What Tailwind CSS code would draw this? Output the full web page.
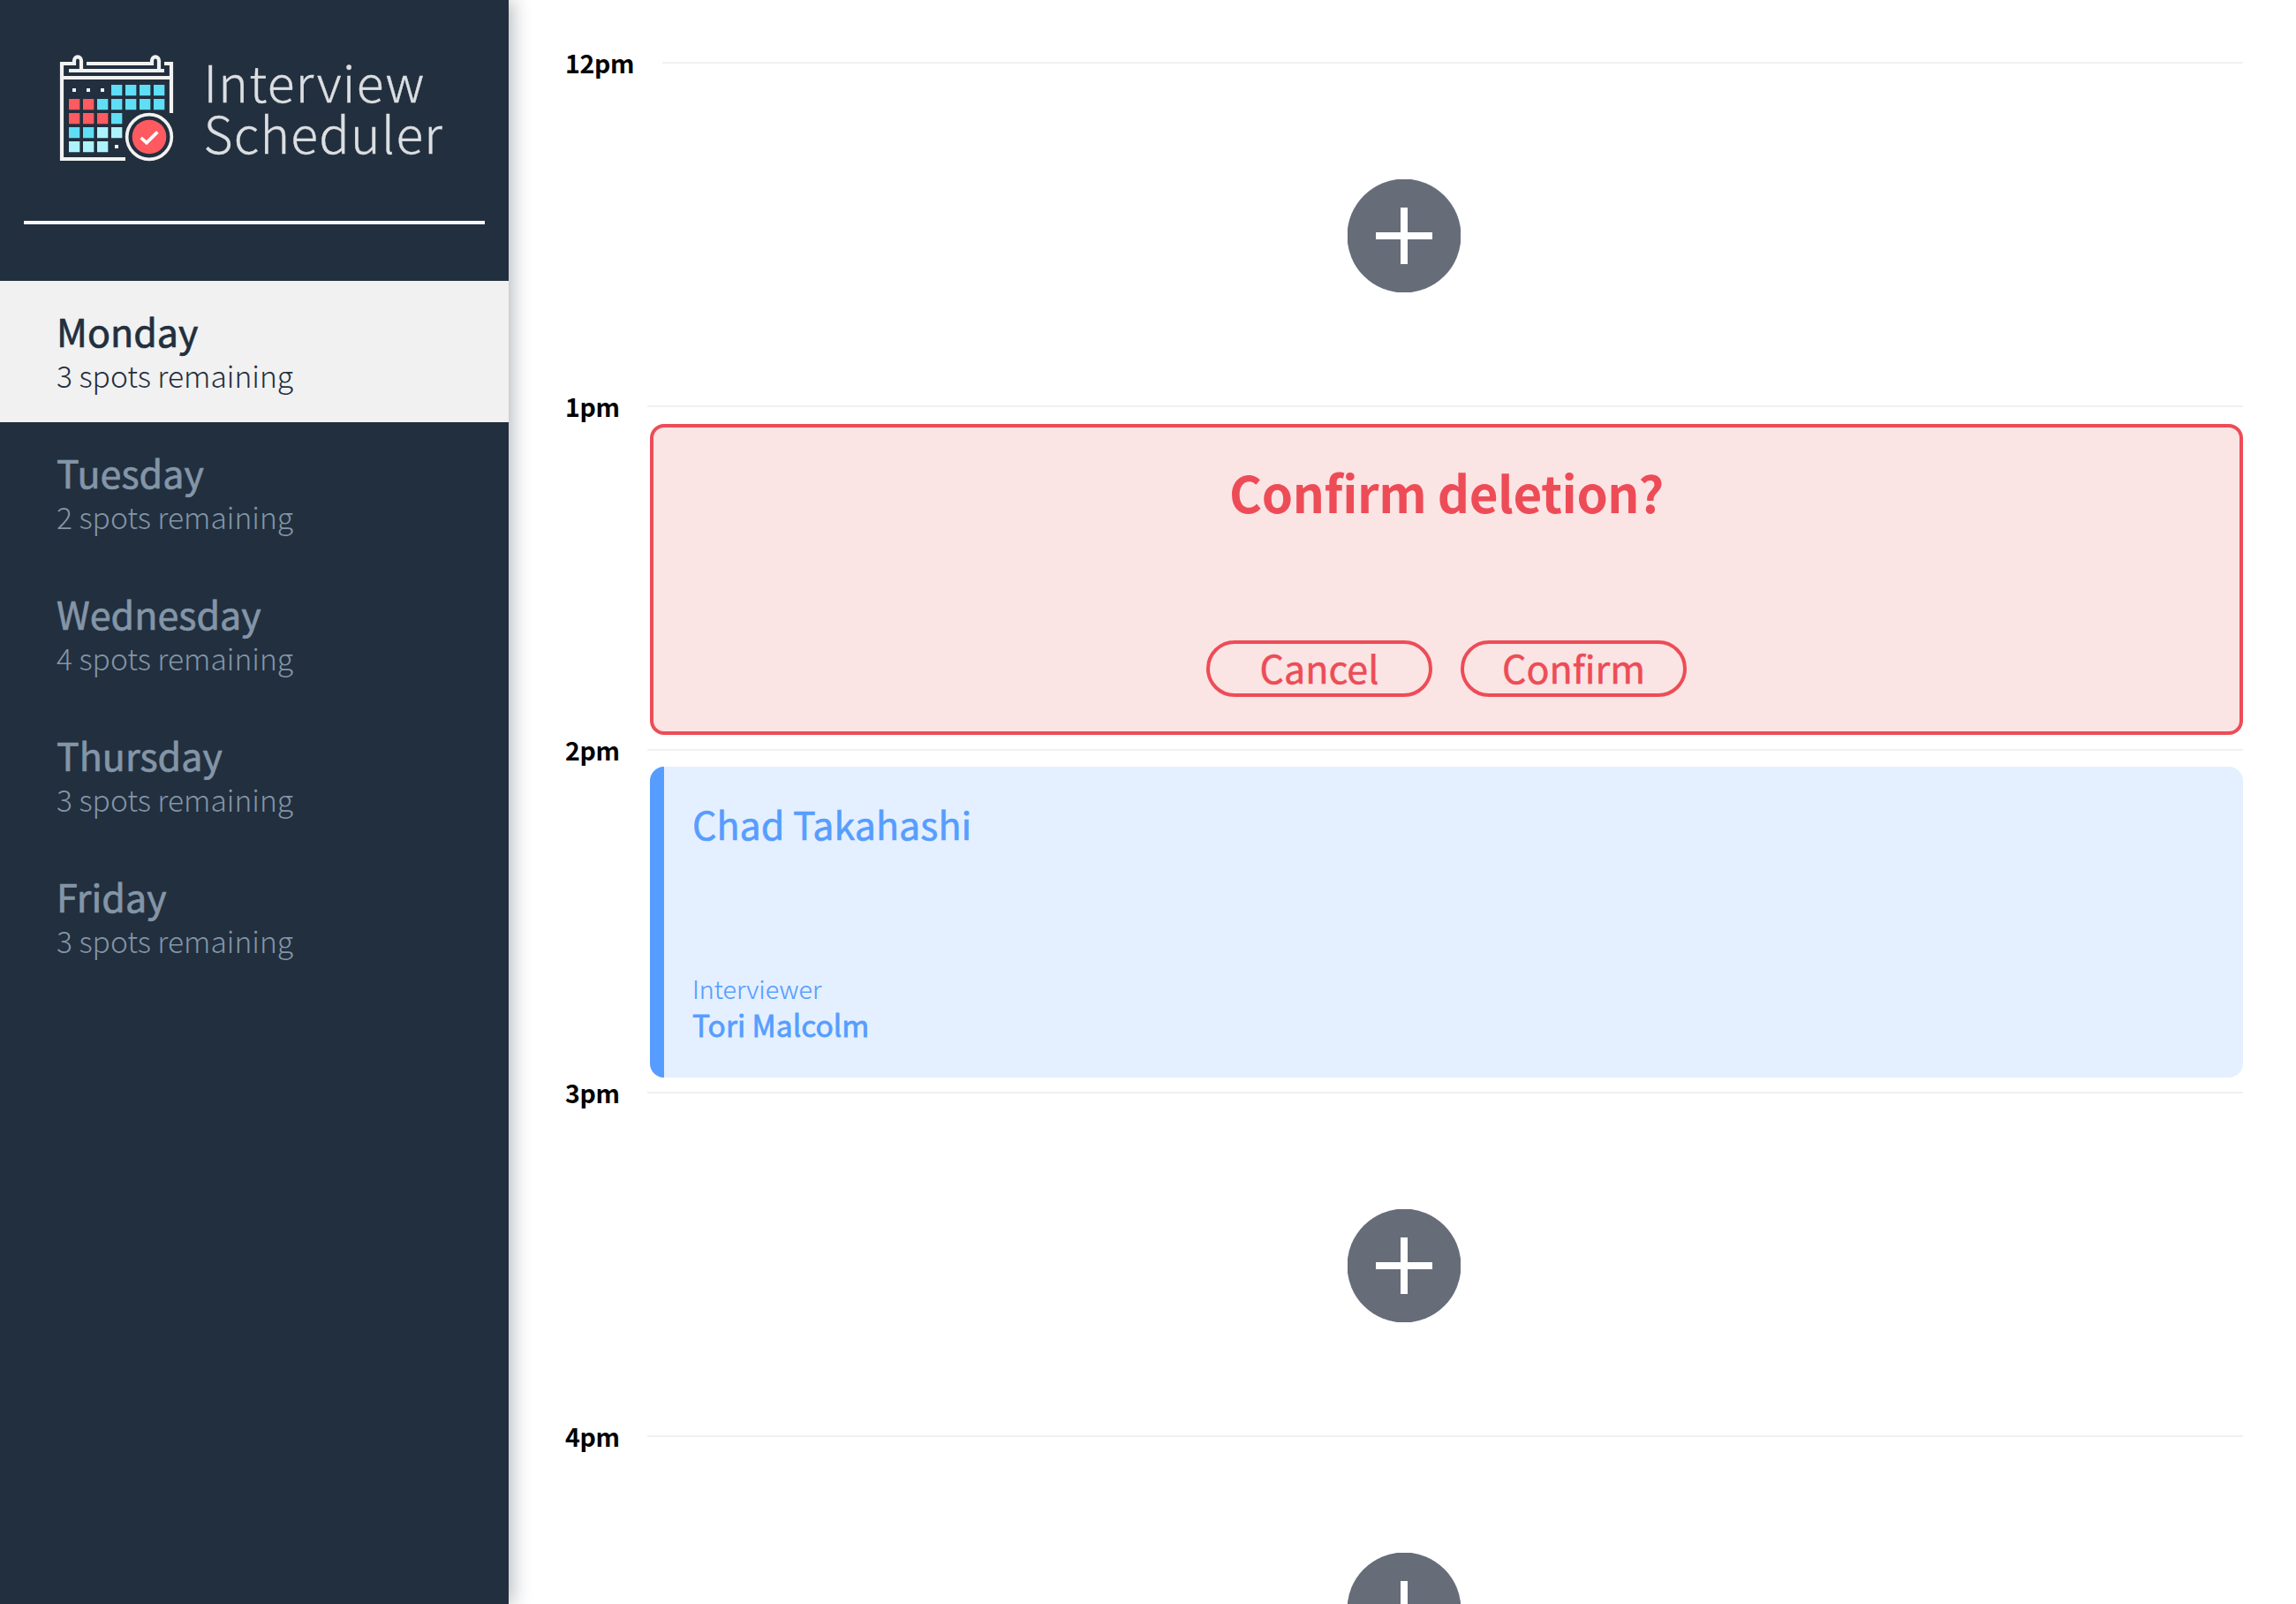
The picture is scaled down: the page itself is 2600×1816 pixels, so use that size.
<!DOCTYPE html>
<html lang="en">
<head>
<meta charset="utf-8">
<title>Interview Scheduler</title>
<script src="https://cdn.jsdelivr.net/npm/@tailwindcss/browser@4"></script>
</head>
<body class="bg-white">
<div class="flex h-screen w-screen overflow-hidden font-['Noto_Sans_CJK_SC','Noto_Sans',sans-serif] text-black">

  <aside class="relative z-10 h-full w-[576px] shrink-0 bg-[#222f3e] pt-[50px] shadow-[4px_0_20px_rgba(24,32,44,0.32)]">
    <svg class="ml-[50px] block h-[150px] w-[480px]" viewBox="0 0 480 150">
      <g transform="scale(0.33333)">
        <!-- calendar frame -->
        <g fill="none" stroke="#f2f2f2" stroke-width="12.5">
          <path d="M276 390H60V66H102V56a12 13 0 0 1 24 0V90"/>
          <path d="M144 66H366V56a12 13 0 0 1 24 0V90"/>
          <path d="M408 66H432V234M84 90H408M60 114H432"/>
        </g>
        <!-- days -->
        <g fill="#f2f2f2">
          <path d="M96 150h12v12h-12zM144 150h12v12h-12zM192 150h12v12h-12zM240 342h12v12h-12z"/>
        </g>
        <path fill="#5fdef5" d="M228 138h37v37h-37zM276 138h37v37h-37zM324 138h37v37h-37zM372 138h37v37h-37zM180 186h37v37h-37zM228 186h37v37h-37zM276 186h37v37h-37zM324 186h37v37h-37zM372 186h37v37h-37zM228 234h37v37h-37zM84 282h37v37h-37zM132 282h37v37h-37z"/>
        <path fill="#ff5a5f" d="M84 186h37v37h-37zM132 186h37v37h-37zM84 234h37v37h-37zM132 234h37v37h-37zM180 234h37v37h-37z"/>
        <path fill="#adf3fd" d="M180 282h37v37h-37zM228 282h37v37h-37zM84 330h37v37h-37zM132 330h37v37h-37zM180 330h37v37h-37z"/>
        <!-- check badge -->
        <circle cx="357" cy="315" r="76" fill="none" stroke="#f2f2f2" stroke-width="11"/>
        <circle cx="357" cy="315" r="58" fill="#ff5a5f"/>
        <path d="M329 318L348 335L385 298" fill="none" stroke="#fff" stroke-width="11"/>
      </g>
      <g class="text-[57px] font-light tracking-[1.3px]" fill="#dcdfe2" stroke="#dcdfe2" stroke-width="0.4">
        <text x="180.4" y="65.7">Interview</text>
        <text x="180.4" y="124">Scheduler</text>
      </g>
    </svg>
    <div class="mx-[27px] mt-[50px] h-1 bg-[#f6f6f8]"></div>
    <nav class="mt-16 text-[#8395a7]">
      <div class="h-40 bg-[#f1f1f1] px-16 pt-8 text-[#222f3e]">
        <h2 class="text-[43px] leading-[48px] [-webkit-text-stroke:0.7px]">Monday</h2>
        <h3 class="text-[33.6px] font-light leading-[53px]">3 spots remaining</h3>
      </div>
      <div class="h-40 px-16 pt-8">
        <h2 class="text-[43px] leading-[48px] [-webkit-text-stroke:0.7px]">Tuesday</h2>
        <h3 class="text-[33.6px] font-light leading-[53px]">2 spots remaining</h3>
      </div>
      <div class="h-40 px-16 pt-8">
        <h2 class="text-[43px] leading-[48px] [-webkit-text-stroke:0.7px]">Wednesday</h2>
        <h3 class="text-[33.6px] font-light leading-[53px]">4 spots remaining</h3>
      </div>
      <div class="h-40 px-16 pt-8">
        <h2 class="text-[43px] leading-[48px] [-webkit-text-stroke:0.7px]">Thursday</h2>
        <h3 class="text-[33.6px] font-light leading-[53px]">3 spots remaining</h3>
      </div>
      <div class="h-40 px-16 pt-8">
        <h2 class="text-[43px] leading-[48px] [-webkit-text-stroke:0.7px]">Friday</h2>
        <h3 class="text-[33.6px] font-light leading-[53px]">3 spots remaining</h3>
      </div>
    </nav>
  </aside>

  <main class="h-full flex-1 overflow-hidden pl-16 pr-[60px] pt-[61px]">
    <section class="h-[389px]">
      <header class="flex h-5 items-center">
        <h4 class="w-[110px] shrink-0 self-start text-[28.5px] font-bold leading-[19px] tracking-[-0.3px]">12pm</h4>
        <div class="h-0.5 flex-1 bg-[#f1f1f1]"></div>
      </header>
      <div class="mt-[122px] flex justify-center">
        <svg class="h-32 w-32" viewBox="0 0 128 128"><circle cx="64" cy="64" r="64.5" fill="#666d79"/><path d="M32 64H96M64 32V96" stroke="#fff" stroke-width="8"/></svg>
      </div>
    </section>

    <section class="h-[389px]">
      <header class="flex h-5 items-center">
        <h4 class="w-[93px] shrink-0 self-start text-[28.5px] font-bold leading-[19px] tracking-[-0.3px]">1pm</h4>
        <div class="h-0.5 flex-1 bg-[#f1f1f1]"></div>
      </header>
      <div class="ml-24 mt-2.5 flex h-[352px] flex-col items-center justify-between rounded-2xl border-4 border-[#ed4c57] bg-[#fbe4e4] pb-[39px] pt-10 text-[#ed4c57]">
        <h1 class="text-[56.5px] font-bold leading-[64px] tracking-[-0.4px]">Confirm deletion?</h1>
        <div class="flex gap-8">
          <button class="h-16 w-64 rounded-full border-4 border-[#ed4c57] pb-1 text-[43px] leading-[52px] [-webkit-text-stroke:0.5px]">Cancel</button>
          <button class="h-16 w-64 rounded-full border-4 border-[#ed4c57] pb-1 text-[43px] leading-[52px] [-webkit-text-stroke:0.5px]">Confirm</button>
        </div>
      </div>
    </section>

    <section class="h-[388px]">
      <header class="flex h-5 items-center">
        <h4 class="w-[93px] shrink-0 self-start text-[28.5px] font-bold leading-[19px] tracking-[-0.3px]">2pm</h4>
        <div class="h-0.5 flex-1 bg-[#f1f1f1]"></div>
      </header>
      <div class="ml-24 mt-[9px] flex h-[352px] overflow-hidden rounded-2xl bg-[#e4f0ff] text-[#579dff]">
        <div class="w-4 bg-[#579dff]"></div>
        <div class="flex flex-col justify-between px-8 py-10">
          <h2 class="text-[43px] leading-[48px] [-webkit-text-stroke:0.6px]">Chad Takahashi</h2>
          <div>
            <h4 class="text-[28.7px] font-light leading-[41px] [-webkit-text-stroke:0.2px]">Interviewer</h4>
            <h3 class="text-[33.5px] leading-[41px] [-webkit-text-stroke:0.8px]">Tori Malcolm</h3>
          </div>
        </div>
      </div>
    </section>

    <section class="h-[389px]">
      <header class="flex h-5 items-center">
        <h4 class="w-[93px] shrink-0 self-start text-[28.5px] font-bold leading-[19px] tracking-[-0.3px]">3pm</h4>
        <div class="h-0.5 flex-1 bg-[#f1f1f1]"></div>
      </header>
      <div class="mt-[122px] flex justify-center">
        <svg class="h-32 w-32" viewBox="0 0 128 128"><circle cx="64" cy="64" r="64.5" fill="#666d79"/><path d="M32 64H96M64 32V96" stroke="#fff" stroke-width="8"/></svg>
      </div>
    </section>

    <section class="h-[389px]">
      <header class="flex h-5 items-center">
        <h4 class="w-[93px] shrink-0 self-start text-[28.5px] font-bold leading-[19px] tracking-[-0.3px]">4pm</h4>
        <div class="h-0.5 flex-1 bg-[#f1f1f1]"></div>
      </header>
      <div class="mt-[122px] flex justify-center">
        <svg class="h-32 w-32" viewBox="0 0 128 128"><circle cx="64" cy="64" r="64.5" fill="#666d79"/><path d="M32 64H96M64 32V96" stroke="#fff" stroke-width="8"/></svg>
      </div>
    </section>
  </main>
</div>
</body>
</html>
